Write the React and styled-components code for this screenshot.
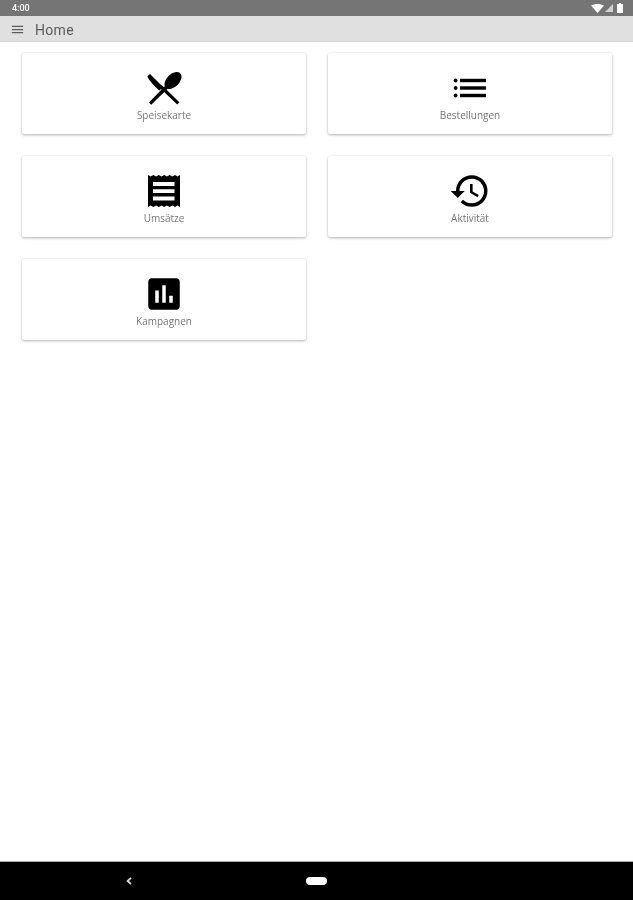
import React from "react";
import styled, { createGlobalStyle } from "styled-components";
import { MdMenu, MdHistory, MdPoll } from "react-icons/md";

const Global = createGlobalStyle`
  html, body {
    margin: 0;
    padding: 0;
    background: #fff;
    font-family: "Open Sans", "Noto Sans", sans-serif;
  }
`;

const Page = styled.div`
  width: 633px;
  height: 900px;
  display: flex;
  flex-direction: column;
  overflow: hidden;
`;

const StatusBar = styled.div`
  height: 16px;
  flex: none;
  display: flex;
  align-items: center;
  justify-content: space-between;
  padding: 0 10px 0 12px;
  background: #757575;
  color: #fff;
  font-size: 9px;
  font-family: "Roboto", sans-serif;
  font-weight: 500;
  filter: blur(0.5px);
`;

const StatusIcons = styled.div`
  display: flex;
  align-items: center;
  gap: 1px;

  svg:last-child {
    margin-left: 3px;
  }
`;

const Toolbar = styled.div`
  height: 26px;
  flex: none;
  display: flex;
  align-items: center;
  gap: 10px;
  padding: 2px 0 0 10px;
  background: #e0e0e0;
  border-bottom: 1px solid #d6d6d6;
  box-sizing: border-box;
  color: #5c5c5c;
  filter: blur(0.4px);
`;

const Title = styled.span`
  font-size: 14px;
  line-height: 22px;
  font-family: "Roboto", sans-serif;
  letter-spacing: 0.3px;
`;

const Grid = styled.div`
  flex: 1;
  display: grid;
  grid-template-columns: 284px 284px;
  grid-auto-rows: 81px;
  column-gap: 22px;
  row-gap: 22px;
  align-content: start;
  padding: 11px 21px 0 22px;
`;

const Card = styled.div`
  display: flex;
  flex-direction: column;
  align-items: center;
  padding-top: 17px;
  box-sizing: border-box;
  background: #fff;
  border-radius: 2px;
  box-shadow: 0 1px 3px rgba(0, 0, 0, 0.3), 0 0 2px rgba(0, 0, 0, 0.06);
`;

const IconBox = styled.div`
  width: 36px;
  height: 36px;
  flex: none;
  display: flex;
  align-items: center;
  justify-content: center;
  color: #000;
  filter: blur(0.4px);

  svg {
    flex: none;
  }
`;

const Label = styled.div`
  font-size: 10px;
  line-height: 13px;
  margin-top: 3px;
  color: #777;
  filter: blur(0.5px);
`;

const NavBar = styled.div`
  height: 39px;
  flex: none;
  display: flex;
  align-items: center;
  gap: 174px;
  padding: 0 0 0 126px;
  box-sizing: border-box;
  background: #000;
  border-top: 1px solid #a8a8a8;
  filter: blur(0.4px);
`;

const HomePill = styled.div`
  width: 21px;
  height: 8px;
  border-radius: 4px;
  background: #fff;
`;

const Cutlery = () => (
  <svg width="36" height="36" viewBox="0 0 36 36" fill="currentColor">
    <path d="M4 4 L17 17 L13.4 20.6 C8.6 16.6 3.4 11 1.4 6.6 Z" />
    <path d="M15.6 15 L33.4 32.2 L31.2 34.6 L13.4 17.4 Z" />
    <ellipse cx="27" cy="10.5" rx="10.2" ry="6.4" transform="rotate(-45 27 10.5)" />
    <path d="M20.4 14.4 L23.2 17.2 L5.2 34.8 L3 32.4 Z" />
  </svg>
);

const Lines = () => (
  <svg width="36" height="36" viewBox="0 0 36 36" fill="currentColor">
    <circle cx="3.6" cy="10.5" r="1.9" />
    <circle cx="3.6" cy="18" r="1.9" />
    <circle cx="3.6" cy="25.5" r="1.9" />
    <rect x="8" y="8.8" width="26" height="3.4" />
    <rect x="8" y="16.3" width="26" height="3.4" />
    <rect x="8" y="23.8" width="26" height="3.4" />
  </svg>
);

const Receipt = () => (
  <svg width="36" height="36" viewBox="0 0 36 36" fill="currentColor">
    <path
      fillRule="evenodd"
      d="M2 2 L4.7 3.6 L7.4 2 L10.1 3.6 L12.8 2 L15.5 3.6 L18.2 2 L20.9 3.6 L23.6 2 L26.3 3.6 L29 2 L31.5 3.6 L34 2 V34 L31.5 32.4 L29 34 L26.3 32.4 L23.6 34 L20.9 32.4 L18.2 34 L15.5 32.4 L12.8 34 L10.1 32.4 L7.4 34 L4.7 32.4 L2 34 Z M7 9 V13 H28.5 V9 Z M7 16.2 V20 H28.5 V16.2 Z M7 23.5 V27.5 H28.5 V23.5 Z"
    />
  </svg>
);

const Wifi = () => (
  <svg width="13" height="9" viewBox="0 0 13 9" fill="#fff">
    <path d="M0 1.6 C3.6 -0.5 9.4 -0.5 13 1.6 L6.5 9 Z" />
  </svg>
);

const Signal = () => (
  <svg width="8" height="8" viewBox="0 0 8 8" fill="#d0d0d0">
    <path d="M8 0 V8 H0 Z" />
  </svg>
);

const Battery = () => (
  <svg width="6" height="10" viewBox="0 0 6 10" fill="#fff">
    <path d="M2 0 H4 V1 H6 V10 H0 V1 H2 Z" />
  </svg>
);

const BackIcon = () => (
  <svg width="6" height="8" viewBox="0 0 6 8" fill="none" stroke="#d8d8d8" strokeWidth="1.8">
    <path d="M5 0.8 L1.6 4 L5 7.2" />
  </svg>
);

const items = [
  { label: "Speisekarte", icon: <Cutlery /> },
  { label: "Bestellungen", icon: <Lines /> },
  { label: "Umsätze", icon: <Receipt /> },
  { label: "Aktivität", icon: <MdHistory size={42} /> },
  { label: "Kampagnen", icon: <MdPoll size={42} /> },
];

const App = () => {
  return (
    <Page>
      <Global />
      <StatusBar>
        <span>4:00</span>
        <StatusIcons>
          <Wifi />
          <Signal />
          <Battery />
        </StatusIcons>
      </StatusBar>
      <Toolbar>
        <MdMenu size={15} />
        <Title>Home</Title>
      </Toolbar>
      <Grid>
        {items.map((item, i) => (
          <Card key={i}>
            <IconBox>{item.icon}</IconBox>
            <Label>{item.label}</Label>
          </Card>
        ))}
      </Grid>
      <NavBar>
        <BackIcon />
        <HomePill />
      </NavBar>
    </Page>
  );
};

export default App;
